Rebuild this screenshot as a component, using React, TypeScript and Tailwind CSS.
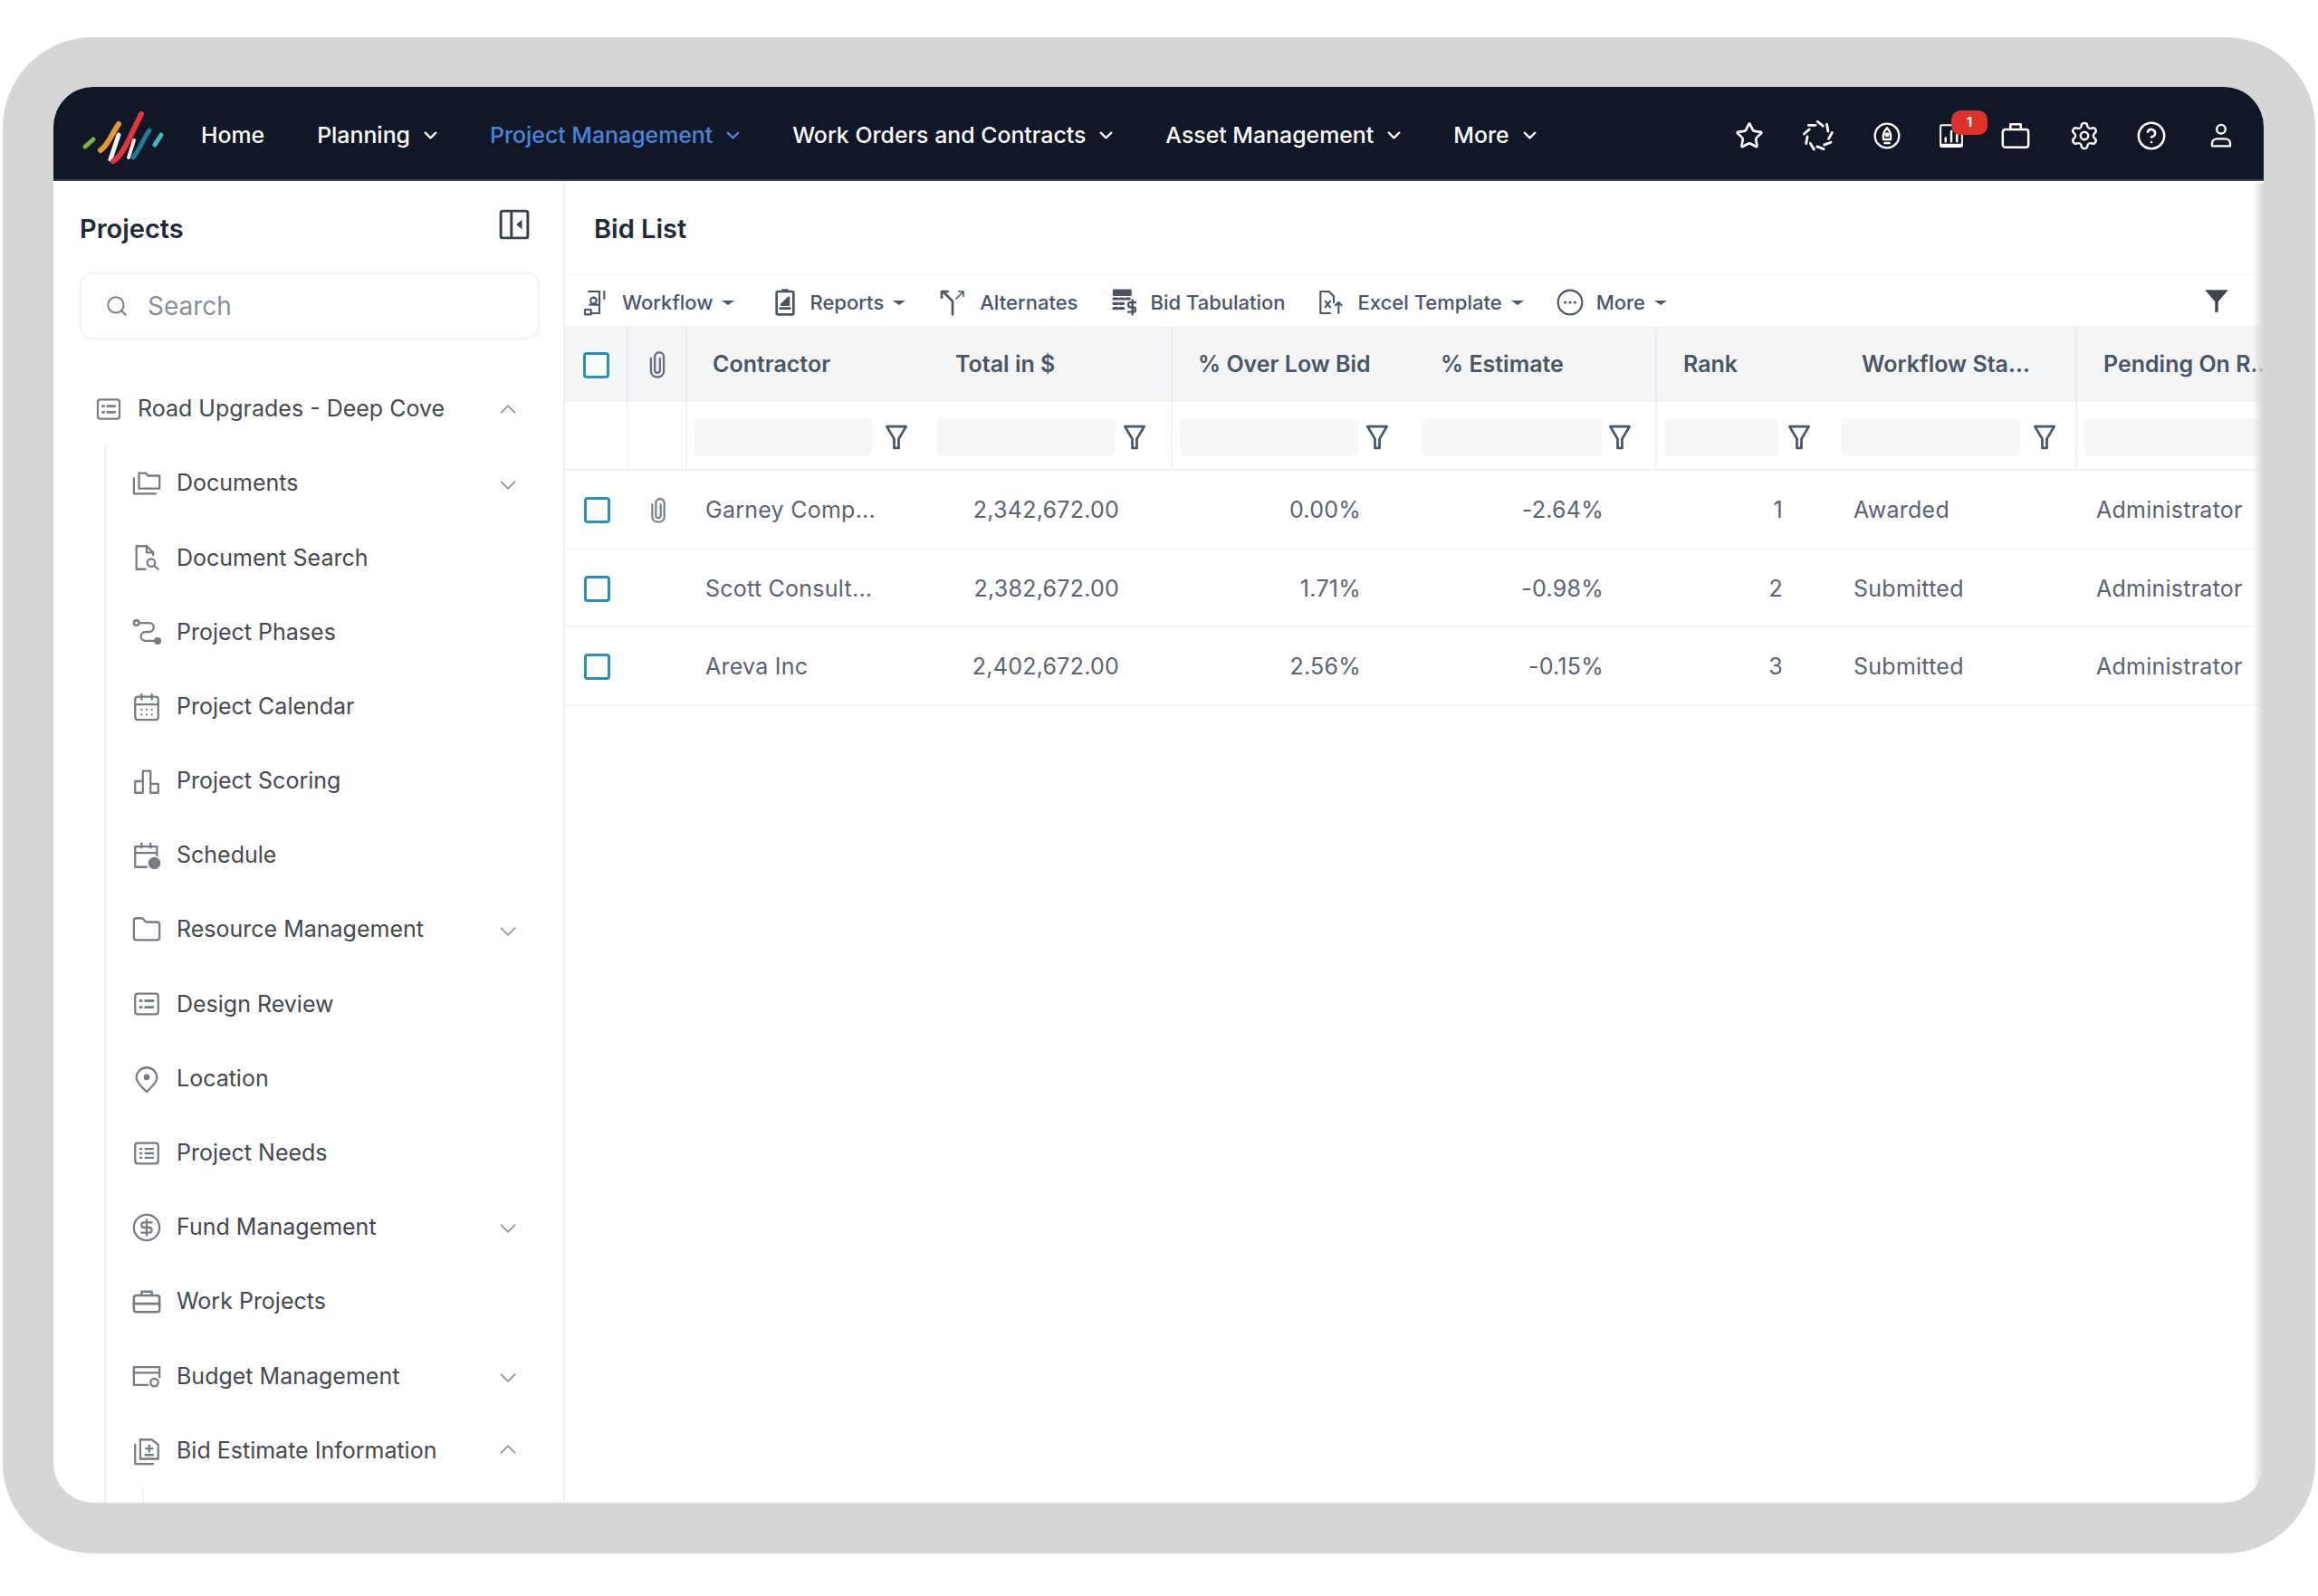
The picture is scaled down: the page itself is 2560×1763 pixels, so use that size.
import React from 'react';
import { Star, Settings, CircleHelp, ChevronDown, ChevronUp, Search, CalendarDays, Folder, CircleDollarSign } from 'lucide-react';

type IconProps = { className?: string; strokeWidth?: number };

const Svg: React.FC<{ className?: string; children: React.ReactNode; sw?: number }> = ({ className, children, sw = 1.6 }) => (
  <svg viewBox="0 0 24 24" fill="none" stroke="currentColor" strokeWidth={sw} strokeLinecap="round" strokeLinejoin="round" className={className}>
    {children}
  </svg>
);

const Logo = () => (
  <svg viewBox="0 0 92 62" className="w-[92px] h-[62px]" fill="none" strokeLinecap="round">
    <path d="M5 43 L14 35" stroke="#7fb03c" strokeWidth="5" />
    <path d="M22 47 C30 42 35 28 42 18" stroke="#e8962e" strokeWidth="6" />
    <path d="M33 57 L42 30" stroke="#f1f1f1" strokeWidth="5" />
    <path d="M36 59 C48 52 57 26 67 7" stroke="#e5333b" strokeWidth="6" />
    <path d="M53 55 L59 36" stroke="#e8e8e8" strokeWidth="4" />
    <path d="M58 55 C66 46 69 34 76 25" stroke="#1d7f96" strokeWidth="5" />
    <path d="M82 41 L89 30" stroke="#3fb8c0" strokeWidth="5" />
  </svg>
);

const SpinnerIcon = ({ className }: IconProps) => (
  <Svg className={className} sw={1.9}>
    {[0, 40, 80, 120, 160, 200, 240, 280, 320].map((a) => (
      <path key={a} d="M11.5 1.5 L15.5 4.8" transform={`rotate(${a} 12 12)`} />
    ))}
  </Svg>
);

const RocketIcon = ({ className }: IconProps) => (
  <Svg className={className} sw={1.8}>
    <circle cx="12" cy="12" r="10" />
    <path d="M12 5.5 C9 8.5 8.5 11.5 9 15 H15 C15.5 11.5 15 8.5 12 5.5Z" />
    <path d="M10 18h4" />
    <circle cx="12" cy="11" r="1" fill="currentColor" />
  </Svg>
);

const ReportIcon = ({ className }: IconProps) => (
  <Svg className={className}>
    <rect x="2.5" y="2.5" width="19" height="19" rx="1" />
    <path d="M7 17v-3M12 17V8M17 17v-6M2.5 20h19" strokeWidth="2" />
  </Svg>
);

const BagIcon = ({ className }: IconProps) => (
  <Svg className={className} sw={1.8}>
    <rect x="2" y="7" width="20" height="14" rx="2" />
    <path d="M8 7V3h8v4" />
  </Svg>
);

const UserIcon = ({ className }: IconProps) => (
  <Svg className={className} sw={1.8}>
    <circle cx="12" cy="6.5" r="3.6" />
    <path d="M4.5 20.5v-2.5c0-2 2-3.500 4-3.500h7c2 0 4 1.500 4 3.500v2.500z" />
  </Svg>
);

const ClipIcon = ({ className }: IconProps) => (
  <Svg className={className} sw={1.7}>
    <path d="M7 7v10c0 6 10 6 10 0V6c0-5-7-5-7 0v10c0 3 4 3 4 0V7" />
  </Svg>
);

const FunnelIcon = ({ className }: IconProps) => (
  <Svg className={className} sw={2.2}>
    <path d="M3.5 2.5h17L14 13.5v8h-4v-8z" />
  </Svg>
);

const SolidFunnel = ({ className }: IconProps) => (
  <svg viewBox="0 0 24 24" className={className} fill="currentColor">
    <path d="M1 2h22L13.5 13v10h-3V13z" />
  </svg>
);

const PanelIcon = ({ className }: IconProps) => (
  <svg viewBox="0 0 32 32" className={className} fill="none" stroke="currentColor" strokeWidth="2.8">
    <rect x="2" y="2" width="28" height="28" rx="2" />
    <path d="M13 2v28" />
    <path d="M24 11v10l-6-5z" fill="currentColor" stroke="none" />
  </svg>
);

const Caret = () => <span className="ml-[10px] w-0 h-0 border-x-[7px] border-x-transparent border-t-[5px] border-t-[#4b5563]" />;

// sidebar drawings
const FoldersIcon = ({ className }: IconProps) => (
  <Svg className={className}>
    <path d="M6 16V4h5l2 2h9v10z" />
    <path d="M2 8v12h17" />
  </Svg>
);
const DocSearchIcon = ({ className }: IconProps) => (
  <Svg className={className}>
    <path d="M11 21H4V3h8l5 5v2" />
    <path d="M12 3v5h5" />
    <circle cx="15.5" cy="16" r="3" />
    <path d="M18 18.5l3 2.5" />
  </Svg>
);
const PhasesIcon = ({ className }: IconProps) => (
  <Svg className={className}>
    <circle cx="4" cy="5" r="2" />
    <path d="M6.5 5H14a3.5 3.5 0 0 1 0 7h-3a3.5 3.5 0 0 0 0 7h7" />
    <circle cx="20.5" cy="19" r="2" fill="currentColor" />
  </Svg>
);
const BarsIcon = ({ className }: IconProps) => (
  <Svg className={className}>
    <path d="M9 21V4h6v17M9 21H3v-9h6M15 21h6v-7h-6" />
  </Svg>
);
const ListBoxIcon = ({ className }: IconProps) => (
  <Svg className={className}>
    <rect x="3" y="4" width="18" height="16" rx="2" />
    <path d="M7 9.5h1M11 9.5h6M7 14.5h1M11 14.5h6" strokeWidth="2" />
  </Svg>
);
const ScheduleIcon = ({ className }: IconProps) => (
  <Svg className={className}>
    <path d="M12 21H3V5h17v7M3 10h17M8 2.5V6M15 2.5V6" />
    <circle cx="18" cy="18" r="4" fill="currentColor" />
  </Svg>
);
const NeedsIcon = ({ className }: IconProps) => (
  <Svg className={className}>
    <rect x="3" y="4" width="18" height="16" rx="2" />
    <path d="M7 8.5h1M7 12h1M7 15.5h1M11 8.5h6M11 12h6M11 15.5h6" />
  </Svg>
);
const PinIcon = ({ className }: IconProps) => (
  <Svg className={className}>
    <path d="M12 22c-3-3-8-7-8-11a8 8 0 0 1 16 0c0 4-5 8-8 11z" />
    <circle cx="12" cy="10.5" r="1.5" fill="currentColor" />
  </Svg>
);
const BriefcaseIcon = ({ className }: IconProps) => (
  <Svg className={className} sw={1.8}>
    <rect x="2" y="7" width="20" height="13" rx="2" />
    <path d="M8 7V4h8v3M2 13.5h20" />
  </Svg>
);
const BudgetIcon = ({ className }: IconProps) => (
  <Svg className={className}>
    <path d="M13 19H2V5h20v8M2 9.5h20" />
    <circle cx="18" cy="17" r="3" />
  </Svg>
);
const BidInfoIcon = ({ className }: IconProps) => (
  <Svg className={className}>
    <path d="M7 3h9l5 4v11H7z" />
    <path d="M3 7v15h14" />
    <path d="M14 7.5v5M11.5 10h5M11 15h6" />
  </Svg>
);

const navItems = [
  { label: 'Home', tone: 'text-white mr-[4px]' },
  { label: 'Planning', tone: 'text-white', more: true },
  { label: 'Project Management', tone: 'text-[#4a86d8]', more: true },
  { label: 'Work Orders and Contracts', tone: 'text-white', more: true },
  { label: 'Asset Management', tone: 'text-white', more: true },
  { label: 'More', tone: 'text-white', more: true },
];

const sideItems: { label: string; Icon: React.FC<IconProps>; open?: boolean }[] = [
  { label: 'Documents', Icon: FoldersIcon, open: false },
  { label: 'Document Search', Icon: DocSearchIcon },
  { label: 'Project Phases', Icon: PhasesIcon },
  { label: 'Project Calendar', Icon: CalendarDays },
  { label: 'Project Scoring', Icon: BarsIcon },
  { label: 'Schedule', Icon: ScheduleIcon },
  { label: 'Resource Management', Icon: Folder, open: false },
  { label: 'Design Review', Icon: ListBoxIcon },
  { label: 'Location', Icon: PinIcon },
  { label: 'Project Needs', Icon: NeedsIcon },
  { label: 'Fund Management', Icon: CircleDollarSign, open: false },
  { label: 'Work Projects', Icon: BriefcaseIcon },
  { label: 'Budget Management', Icon: BudgetIcon, open: false },
  { label: 'Bid Estimate Information', Icon: BidInfoIcon, open: true },
];

const bids = [
  { name: 'Garney Comp...', total: '2,342,672.00', over: '0.00%', est: '-2.64%', rank: '1', status: 'Awarded', clip: true },
  { name: 'Scott Consult...', total: '2,382,672.00', over: '1.71%', est: '-0.98%', rank: '2', status: 'Submitted' },
  { name: 'Areva Inc', total: '2,402,672.00', over: '2.56%', est: '-0.15%', rank: '3', status: 'Submitted' },
];

const gridCols = 'grid grid-cols-[70px_65px_267px_269px_268px_267px_195px_269px_1fr]';

const Check = () => <span className="block w-[29px] h-[29px] rounded-[4px] border-[3px] border-[#2b8dbd] bg-white" />;

const HeadCell: React.FC<{ text: string; line?: boolean; pad?: string }> = ({ text, line, pad = 'pl-[29px]' }) => (
  <div className={`flex items-center ${pad} whitespace-nowrap overflow-hidden ${line ? 'border-r-2 border-[#e9ebee]' : ''}`}>{text}</div>
);

const FilterCell: React.FC<{ w: string; gap: string; line?: boolean }> = ({ w, gap, line }) => (
  <div className={`flex items-center pl-[8px] pt-[3px] ${line ? 'border-r-2 border-[#f0f1f3]' : ''}`}>
    <span className={`${w} h-[42px] rounded-[6px] bg-[#f6f7f9] shrink-0`} />
    <FunnelIcon className={`w-[30px] h-[30px] ${gap} text-[#4b5563] shrink-0`} />
  </div>
);

const ToolItem: React.FC<{ icon: React.ReactNode; text: string; caret?: boolean; gap?: string }> = ({ icon, text, caret, gap = 'mr-[14px]' }) => (
  <div className="flex items-center">
    <span className={`w-[32px] h-[32px] ${gap} text-[#4b5563]`}>{icon}</span>
    <span>{text}</span>
    {caret && <Caret />}
  </div>
);

export default function App() {
  return (
    <div className="w-[2560px] h-[1763px] bg-white pt-[41px] pl-[3px] [font-family:Inter,sans-serif] overflow-hidden">
      <div className="w-[2554px] h-[1675px] rounded-[100px] bg-[#d6d6d6] pt-[55px] pl-[56px]">
        <div className="relative w-[2441px] h-[1564px] rounded-[44px] overflow-hidden bg-white flex flex-col">
          <header className="h-[104px] shrink-0 bg-[#101827] flex items-center pt-[6px] border-b-2 border-[#3a4250]">
            <div className="ml-[30px] mr-[41px] shrink-0"><Logo /></div>
            <nav className="flex items-center gap-[54px] text-[24.85px] font-medium whitespace-nowrap">
              {navItems.map((n) => (
                <div key={n.label} className={`flex items-center ${n.tone}`}>
                  <span>{n.label}</span>
                  {n.more && <ChevronDown className="w-[23px] h-[23px] ml-[11px]" strokeWidth={2.4} />}
                </div>
              ))}
            </nav>
            <div className="ml-auto mr-[31px] flex items-center text-white">
              <Star className="w-[32px] h-[32px] mr-[42px]" strokeWidth={2} />
              <SpinnerIcon className="w-[36px] h-[36px] mr-[42px]" />
              <RocketIcon className="w-[32px] h-[32px] mr-[40px]" />
              <div className="relative w-[30px] h-[30px] mr-[39px]">
                <ReportIcon className="w-[30px] h-[30px]" />
                <span className="absolute -top-[13px] left-[15px] w-[40px] h-[27px] rounded-[10px] bg-[#e0302a] text-white text-[15px] font-bold flex items-center justify-center">1</span>
              </div>
              <BagIcon className="w-[34px] h-[34px] mr-[42px]" />
              <Settings className="w-[34px] h-[34px] mr-[40px]" strokeWidth={1.7} />
              <CircleHelp className="w-[34px] h-[34px] mr-[44px]" strokeWidth={1.8} />
              <UserIcon className="w-[32px] h-[32px]" />
            </div>
          </header>

          <div className="flex flex-1 min-h-0">
            <aside className="w-[565px] shrink-0 border-r-2 border-[#f1f2f4] flex flex-col overflow-hidden">
              <div className="flex items-start justify-between pl-[29px] pr-[37px] h-[101px] pt-[31px]">
                <h2 className="text-[29px] font-semibold text-[#1f2937] leading-[44px]">Projects</h2>
                <PanelIcon className="w-[34px] h-[34px] text-[#374151]" />
              </div>
              <div className="mx-[29px] w-[508px] h-[74px] rounded-[14px] border-2 border-[#f2f3f5] flex items-center pl-[26px] shrink-0">
                <Search className="w-[26px] h-[26px] text-[#7b8088]" strokeWidth={1.8} />
                <span className="ml-[21px] text-[28px] text-[#8a8f98]">Search</span>
              </div>
              <div className="mt-[36px] h-[82px] shrink-0 flex items-center pl-[45px] pr-[46px] text-[#45484e] text-[25px]">
                <ListBoxIcon className="w-[32px] h-[32px] text-[#777b82] mr-[16px]" />
                <span className="flex-1">Road Upgrades - Deep Cove</span>
                <ChevronUp className="w-[30px] h-[30px] text-[#85898f]" strokeWidth={1.4} />
              </div>
              <div className="ml-[56px] border-l-2 border-[#f0f1f3] flex-1 min-h-0">
                {sideItems.map(({ label, Icon, open }) => (
                  <div key={label} className="h-[82.2px] flex items-center pl-[28px] pr-[46px] text-[#45484e] text-[25px]">
                    <Icon className="w-[34px] h-[34px] text-[#777b82] mr-[16px] shrink-0" strokeWidth={1.6} />
                    <span className="flex-1">{label}</span>
                    {open === false && <ChevronDown className="w-[30px] h-[30px] text-[#85898f] mt-[3px]" strokeWidth={1.4} />}
                    {open === true && <ChevronUp className="w-[30px] h-[30px] text-[#85898f] -mt-[3px]" strokeWidth={1.4} />}
                  </div>
                ))}
                <div className="ml-[40px] h-[20px] border-l-2 border-[#f0f1f3]" />
              </div>
            </aside>

            <main className="flex-1 min-w-0 flex flex-col overflow-hidden">
              <div className="h-[102px] shrink-0 pl-[32px] pt-[31px]">
                <h1 className="text-[29px] font-semibold text-[#1f2937] leading-[44px]">Bid List</h1>
              </div>
              <div className="h-[60px] shrink-0 border-y-2 border-[#f4f5f6] flex items-center pl-[18px] pr-[38px] pt-[4px] text-[22px] font-medium text-[#4b5563] whitespace-nowrap">
                <ToolItem text="Workflow" caret gap="mr-[13px]" icon={<Svg className="w-full h-full"><path d="M6 3h9v11H7M15 3v18H9M19 3v6M3 22h5v-4H3zM10 8a2.5 2.5 0 1 0 .1 0" /></Svg>} />
                <div className="w-[40px]" />
                <ToolItem text="Reports" caret gap="mr-[11px]" icon={<Svg className="w-full h-full" sw={2}><rect x="5" y="3" width="14" height="19" rx="1" /><path d="M10 2h4M8 17h8" /><path d="M9 14l3-3 3-3v6z" fill="currentColor" /></Svg>} />
                <div className="w-[36px]" />
                <ToolItem text="Alternates" icon={<Svg className="w-full h-full"><path d="M12 22V11L4 3M3 8V3h5" strokeWidth="2" /><path d="M15 9l6-6M17 3h4v4" strokeWidth="1.2" /></Svg>} />
                <div className="w-[36px]" />
                <ToolItem text="Bid Tabulation" gap="mr-[12px]" icon={<Svg className="w-full h-full"><rect x="3" y="2" width="14" height="4" fill="currentColor" /><path d="M3 9h3M8 9h3M13 9h3M3 13h3M8 13h3M3 17h3M8 17h3" strokeWidth="2.4" /><path d="M21 12h-4a1.5 1.5 0 0 0 0 4h2a1.5 1.5 0 0 1 0 4h-4M18.5 10v12" strokeWidth="1.8" /></Svg>} />
                <div className="w-[33px]" />
                <ToolItem text="Excel Template" caret gap="mr-[15px]" icon={<Svg className="w-full h-full"><path d="M12 21H4V3h7l4 4v5" /><path d="M8 11l4 5M12 11l-4 5M19 21v-9M16.5 14.5L19 12l2.5 2.5" /></Svg>} />
                <div className="w-[35px]" />
                <ToolItem text="More" caret gap="mr-[13px]" icon={<Svg className="w-full h-full"><circle cx="12" cy="12" r="10" /><path d="M8 12h.01M12 12h.01M16 12h.01" strokeWidth="2.4" /></Svg>} />
                <SolidFunnel className="ml-auto w-[28px] h-[28px] text-[#3f4652] -mt-[4px]" />
              </div>

              <div className={`${gridCols} h-[82px] shrink-0 bg-[#f3f5f7] text-[25px] font-semibold text-[#4b5563]`}>
                <div className="flex items-center justify-center border-r-2 border-[#e9ebee]"><Check /></div>
                <div className="flex items-center justify-center border-r-2 border-[#e9ebee]"><ClipIcon className="w-[34px] h-[34px] text-[#6b7280]" /></div>
                <HeadCell text="Contractor" pad="pl-[28px]" />
                <HeadCell text="Total in $" line />
                <HeadCell text="% Over Low Bid" pad="pl-[28px]" />
                <HeadCell text="% Estimate" line pad="pl-[28px]" />
                <HeadCell text="Rank" />
                <HeadCell text="Workflow Sta..." line pad="pl-[31px]" />
                <HeadCell text="Pending On R.." />
              </div>
              <div className={`${gridCols} h-[76px] shrink-0 border-b-2 border-[#f0f1f3]`}>
                <div className="border-r-2 border-[#f4f5f6]" />
                <div className="border-r-2 border-[#f4f5f6]" />
                <FilterCell w="w-[196px]" gap="ml-[12px]" />
                <FilterCell w="w-[198px]" gap="ml-[6px]" line />
                <FilterCell w="w-[197px]" gap="ml-[6px]" />
                <FilterCell w="w-[198px]" gap="ml-[5px]" line />
                <FilterCell w="w-[126px]" gap="ml-[8px]" />
                <FilterCell w="w-[198px]" gap="ml-[12px]" line />
                <div className="flex items-center pl-[8px] pt-[3px]"><span className="w-[230px] h-[42px] rounded-[6px] bg-[#f6f7f9]" /></div>
              </div>
              {bids.map((b) => (
                <div key={b.name} className={`${gridCols} h-[86.5px] shrink-0 border-b-2 border-[#f4f5f6] text-[25px] tracking-[0.25px] text-[#5c6370] items-center whitespace-nowrap pt-[3px]`}>
                  <div className="flex justify-center"><Check /></div>
                  <div className="flex justify-center">{b.clip && <ClipIcon className="w-[32px] h-[32px] text-[#7b818a]" />}</div>
                  <div className="pl-[20px]">{b.name}</div>
                  <div className="text-right pr-[59px]">{b.total}</div>
                  <div className="text-right pr-[60px]">{b.over}</div>
                  <div className="text-right pr-[59px]">{b.est}</div>
                  <div className="text-right pr-[56px]">{b.rank}</div>
                  <div className="pl-[22px]">{b.status}</div>
                  <div className="pl-[21px]">Administrator</div>
                </div>
              ))}
            </main>
          </div>
          <div className="absolute right-0 top-[106px] bottom-0 w-[12px] bg-linear-to-r from-transparent to-[#d6d6d6]" />
        </div>
      </div>
    </div>
  );
}
